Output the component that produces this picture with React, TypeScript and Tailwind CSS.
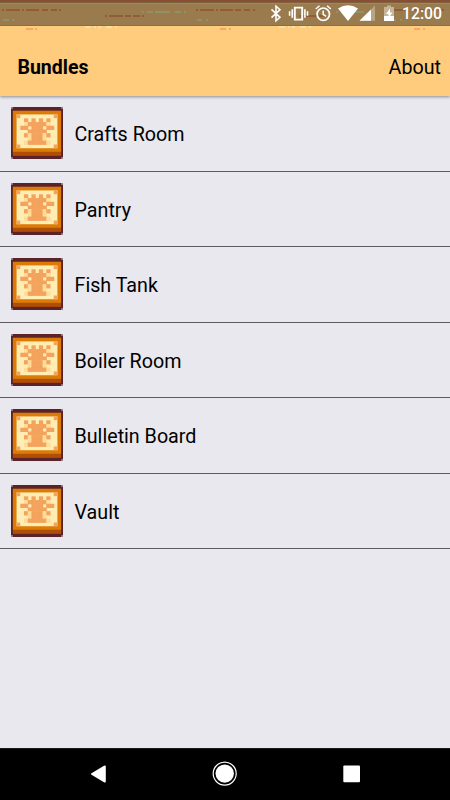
import { Fragment } from 'react';

const bundles = ['Crafts Room', 'Pantry', 'Fish Tank', 'Boiler Room', 'Bulletin Board', 'Vault'];

// # = bark and leaves, + = lighter shade around them
const tree = [
    '.#.#.#.#.',
    '.+#####+.',
    '##.###.##',
    '..#####..',
    '.#+###+#.',
    '..+###+..',
    '.+#####+.',
];

const cellColors: Record<string, string> = {
    '#': '#f3a35d',
    '+': '#ffdc98',
};

// [x, y, width, color] of the floorboard grain behind the status bar
const grain: [number, number, number, string][] = [
    [2, 9, 2, '#925c37'], [6, 9, 14, '#925c37'], [22, 9, 2, '#925c37'], [26, 9, 13, '#925c37'],
    [42, 9, 6, '#925c37'], [51, 9, 6, '#925c37'], [59, 9, 2, '#925c37'],
    [3, 19, 6, '#8f9168'], [12, 19, 2, '#8f9168'],
    [105, 15, 2, '#925c37'], [109, 15, 14, '#925c37'], [125, 15, 6, '#925c37'], [133, 15, 7, '#925c37'], [142, 15, 2, '#925c37'],
    [142, 11, 2, '#8f9168'], [147, 11, 6, '#8f9168'], [155, 11, 15, '#8f9168'], [175, 11, 6, '#8f9168'], [184, 11, 2, '#8f9168'],
    [196, 9, 2, '#925c37'], [200, 9, 14, '#925c37'], [216, 9, 2, '#925c37'], [220, 9, 13, '#925c37'],
    [235, 9, 6, '#925c37'], [244, 9, 6, '#925c37'], [253, 9, 2, '#925c37'],
    [197, 19, 5, '#8f9168'], [206, 19, 2, '#8f9168'],
    [299, 15, 2, '#925c37'], [303, 15, 14, '#925c37'], [319, 15, 6, '#925c37'],
    [336, 11, 2, '#8f9168'], [341, 11, 6, '#8f9168'], [349, 11, 15, '#8f9168'], [369, 11, 6, '#8f9168'],
    [390, 9, 2, '#925c37'], [394, 9, 14, '#925c37'], [414, 9, 13, '#925c37'], [429, 9, 6, '#925c37'], [438, 9, 6, '#925c37'],
    [391, 19, 5, '#8f9168'], [400, 19, 2, '#8f9168'],
    [85, 26, 6, '#f3e0a4'], [94, 26, 2, '#f3e0a4'], [98, 26, 3, '#f3e0a4'], [106, 26, 6, '#f3e0a4'], [115, 26, 2, '#f3e0a4'],
    [279, 26, 6, '#f3e0a4'], [288, 26, 2, '#f3e0a4'], [292, 26, 3, '#f3e0a4'], [300, 26, 6, '#f3e0a4'], [309, 26, 2, '#f3e0a4'],
    [26, 28, 7, '#f4a768'], [35, 28, 2, '#f4a768'],
    [220, 28, 6, '#f4a768'], [229, 28, 2, '#f4a768'],
    [414, 28, 6, '#f4a768'], [423, 28, 2, '#f4a768'],
];

function BundleIcon() {
    return (
        <svg className="h-[52px] w-[52px] shrink-0" viewBox="0 0 28 28">
            <rect width="28" height="28" fill="#5a2229" />
            <rect x="1" y="2" width="26" height="22.2" fill="#dc7b05" />
            <rect x="1" y="24.2" width="26" height="2.1" fill="#b14e05" />
            <rect x="3" y="4" width="22" height="18.2" fill="#ffedb4" />
            {[3, 23].map((x) => [4, 20.2].map((y) => (
                <rect key={`${x}-${y}`} x={x} y={y} width="2" height="2" fill="#f3a35d" />
            )))}
            {[0, 27].map((x) => [0, 27].map((y) => (
                <rect key={`${x}-${y}`} x={x} y={y} width="1" height="1" fill="#96898e" />
            )))}
            {tree.map((row, y) => row.split('').map((cell, x) => cell !== '.' && (
                <rect key={`${x}-${y}`} x={5 + x * 2} y={6.1 + y * 2} width="2.3" height="2.3" fill={cellColors[cell]} />
            )))}
        </svg>
    );
}

function StatusBar() {
    return (
        <div className="relative h-[26px] shrink-0 bg-[#997b4d]">
            <svg className="absolute top-0 left-0 h-8 w-[450px]" viewBox="0 0 450 32" shapeRendering="crispEdges">
                <rect width="450" height="2" fill="#894f35" />
                <rect y="2" width="450" height="1" fill="#7f6341" />
                <rect y="3" width="450" height="1" fill="#998a60" />
                <rect y="25" width="450" height="1" fill="#8f6d40" />
                {grain.map(([x, y, width, color]) => (
                    <rect key={`${x}-${y}`} x={x} y={y} width={width} height="2" fill={color} />
                ))}
            </svg>
            <svg className="absolute top-0 left-0 h-[26px] w-[450px]" viewBox="0 0 450 26" fill="none" stroke="#fff">
                {/* Bluetooth */}
                <path d="M271.5 9.3l8.5 8-4 3.5V6.2l4 3.5-8.5 8" strokeWidth="1.6" />
                {/* Vibrate */}
                <path d="M294.8 7.6h7.4v12h-7.4z" strokeWidth="1.9" />
                <path d="M292.2 9.3v8.4M289.6 11.3v4.4M304.9 9.3v8.4M307.5 11.3v4.4" strokeWidth="1.6" />
                {/* Alarm */}
                <circle cx="323.3" cy="14.2" r="6.2" strokeWidth="1.7" />
                <path d="M323.2 10.5v4l2.9 1.8M315.8 9l3.7-3.2M330.8 9l-3.7-3.2" strokeWidth="1.5" />
                {/* Wi-Fi */}
                <path d="M338 8.6Q348 2 358 8.6L348 21z" fill="#fff" stroke="none" />
                {/* Signal */}
                <path d="M375 5.5V20.8H359.5z" fill="#b8a582" stroke="none" />
                <path d="M371 9.5V20.8H359.5z" fill="#fff" stroke="none" />
                {/* Battery */}
                <path d="M384 7h3V5.500h4V7h3v14h-10z" fill="#c5b59a" stroke="none" />
                <path d="M384 16h10v5h-10z" fill="#fff" stroke="none" />
                <path d="M390 8.500l-4 5.500h2.500v4l4-5.500H390z" fill="#fff" stroke="none" />
            </svg>
            <span className="absolute top-[4px] left-[402px] text-[15.8px] leading-5 font-medium text-white">12:00</span>
        </div>
    );
}

export default function App() {
    return (
        <div className="flex h-[800px] w-[450px] flex-col overflow-hidden bg-[#e9e8ee] font-[Roboto,sans-serif] text-black">
            <StatusBar />
            <header className="flex h-[70px] shrink-0 items-center justify-between bg-[#ffcb7c] pt-[13px] pr-[9px] pl-[17.5px] shadow-[0_1px_3px_rgba(0,0,0,0.4)]">
                <h1 className="text-[19.5px] leading-6 font-bold">Bundles</h1>
                <button className="text-[19.7px] leading-6">About</button>
            </header>

            <main className="flex-1">
                {bundles.map((name) => (
                    <Fragment key={name}>
                        <div className="flex h-[74.5px] items-center gap-[11.5px] pl-[11px]">
                            <BundleIcon />
                            <span className="pt-[3.5px] text-[19.7px] leading-6">{name}</span>
                        </div>
                        <div className="h-px bg-[#5c5b60]" />
                    </Fragment>
                ))}
            </main>

            <nav className="h-[52px] shrink-0 border-t border-[#1a1a1a] bg-black">
                <svg className="-mt-px h-[52px] w-[450px]" viewBox="0 0 450 52" fill="#fff">
                    <path d="M91.5 25.2l12.500-7.500q1.800-.9 1.800.8v15q0 1.700-1.800.8L91.500 26.800q-1.300-.8 0-1.600z" />
                    <circle cx="224.7" cy="25.6" r="9.2" />
                    <circle cx="224.7" cy="25.6" r="11.5" fill="none" stroke="#fff" strokeWidth="1.2" />
                    <rect x="343.3" y="17.5" width="16.7" height="16.7" rx="1" />
                </svg>
            </nav>
        </div>
    );
}
